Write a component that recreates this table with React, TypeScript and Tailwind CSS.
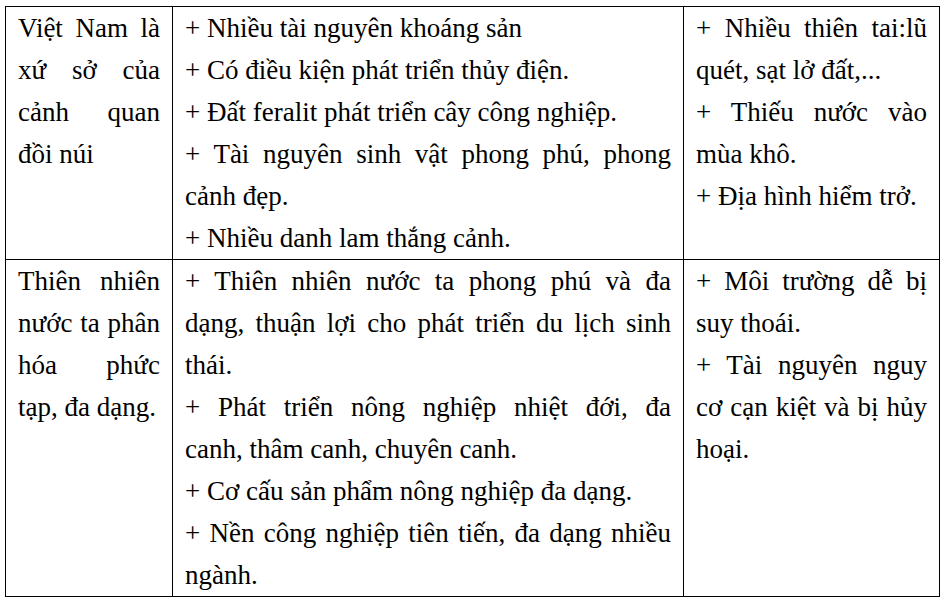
import React from 'react';

const rows = [
  {
    title: 'Việt Nam là xứ sở của cảnh quan đồi núi',
    pros: [
      '+ Nhiều tài nguyên khoáng sản',
      '+ Có điều kiện phát triển thủy điện.',
      '+ Đất feralit phát triển cây công nghiệp.',
      '+ Tài nguyên sinh vật phong phú, phong cảnh đẹp.',
      '+ Nhiều danh lam thắng cảnh.',
    ],
    cons: ['+ Nhiều thiên tai:lũ quét, sạt lở đất,...', '+ Thiếu nước vào mùa khô.', '+ Địa hình hiểm trở.'],
  },
  {
    title: 'Thiên nhiên nước ta phân hóa phức tạp, đa dạng.',
    pros: [
      '+ Thiên nhiên nước ta phong phú và đa dạng, thuận lợi cho phát triển du lịch sinh thái.',
      '+ Phát triển nông nghiệp nhiệt đới, đa canh,\u00A0thâm canh, chuyên canh.',
      '+ Cơ cấu sản phẩm nông nghiệp đa dạng.',
      '+ Nền công nghiệp tiên tiến, đa dạng nhiều ngành.',
    ],
    cons: ['+ Môi trường dễ bị suy thoái.', '+ Tài nguyên nguy cơ cạn kiệt và bị hủy hoại.'],
  },
];

// one table cell: 12px side padding, 42px lines, justified like the Word table
const cell = "border-r border-b border-black px-3 text-justify font-['Liberation_Serif'] text-[27px] leading-[42px] text-black";

export default function App() {
  return (
    <div className="min-h-screen bg-white pt-[6px] pl-[5px] font-['Liberation_Serif'] text-black">
      <div className="grid w-[935px] grid-cols-[167px_511px_256px] border-t border-l border-black">
        {rows.map((row) => (
          <React.Fragment key={row.title}>
            <div className={cell}>{row.title}</div>
            <div className={cell}>
              {row.pros.map((p) => (
                <p key={p}>{p}</p>
              ))}
            </div>
            <div className={cell}>
              {row.cons.map((c) => (
                <p key={c}>{c}</p>
              ))}
            </div>
          </React.Fragment>
        ))}
      </div>
    </div>
  );
}
